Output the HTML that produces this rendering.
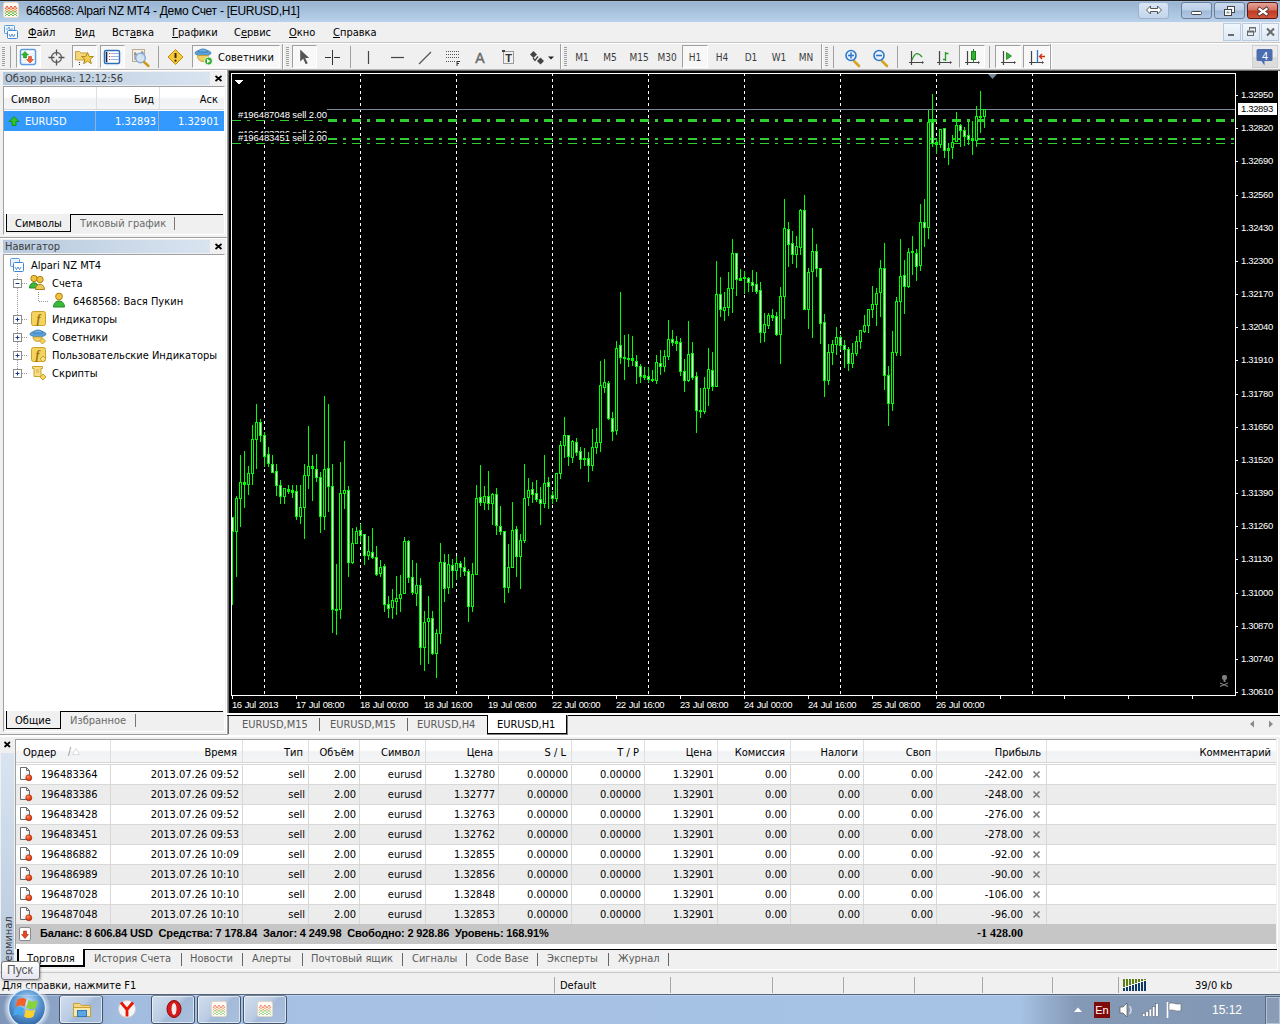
<!DOCTYPE html>
<html lang="ru"><head><meta charset="utf-8"><title>6468568: Alpari NZ MT4 - Демо Счет - [EURUSD,H1]</title>
<style>
html,body{margin:0;padding:0;}
body{width:1280px;height:1024px;overflow:hidden;position:relative;background:#f0f0f0;font-family:"DejaVu Sans Condensed","Liberation Sans",sans-serif;font-size:11px;color:#000;}
.a{position:absolute;}
.t{position:absolute;white-space:nowrap;line-height:13px;}
svg{position:absolute;overflow:visible;}
#title{left:0;top:0;width:1280px;height:22px;background:linear-gradient(#a2bedc 0,#a2bedc 2px,#99b4d1 2px,#b9d1ea 22px);}
#title .top{left:0;top:0;width:1280px;height:1px;background:#262220;}
#title .cap{left:26px;top:3px;font-size:12px;line-height:16px;color:#000;letter-spacing:-0.28px;font-family:"Liberation Sans",sans-serif;}
.wb{position:absolute;top:2px;height:17px;border:1px solid #6b7f99;border-radius:3px;background:linear-gradient(#cbdbee 0,#bccfe8 48%,#a0badb 52%,#b2c9e5 100%);box-sizing:border-box;}
.wb.close{border-color:#5a1714;background:linear-gradient(#e2a499 0,#d3705f 48%,#c03a22 52%,#d0573c 100%);}
#menu{left:0;top:22px;width:1280px;height:20px;background:#f0f0f0;border-bottom:1px solid #fafafa;}
#menu .t{top:4px;font-size:11px;line-height:13px;}
#menu u{text-decoration:underline;}
.mdi{position:absolute;top:23px;width:18px;height:18px;box-sizing:border-box;border:1px solid #b9cbe0;background:linear-gradient(#f1f6fc,#dde9f6);}
#tb{left:0;top:42px;width:1280px;height:28px;background:#f0f0f0;border-top:1px solid #c5c5c5;box-sizing:border-box;}
#tb:before{content:"";position:absolute;left:0;top:0;width:1280px;height:1px;background:#fff;}
#tb:after{content:"";position:absolute;left:0;top:26px;width:1280px;height:1px;background:#b8b8b8;}
.pb{position:absolute;top:2px;height:23px;box-sizing:border-box;border:1px solid;border-color:#a0a0a0 #fff #fff #a0a0a0;background:#f8f8f8;}
.grip{position:absolute;top:4px;width:3px;height:20px;background:repeating-linear-gradient(#a0a0a0 0,#a0a0a0 1px,#f0f0f0 1px,#f0f0f0 2px);}
.sep{position:absolute;top:3px;width:1px;height:22px;background:#a0a0a0;}
#tb .t{top:7px;font-size:11px;line-height:13px;color:#333;}
#tb svg{top:0;left:0;}
.ptitle{position:absolute;left:3px;width:207px;height:13px;background:linear-gradient(90deg,#b7c9dd,#d9e4f0);}
.ptitle .t{left:2px;top:0px;font-size:11px;line-height:13px;color:#3c3c3c;}
.px{position:absolute;left:214px;width:9px;height:9px;}
.wbox{position:absolute;left:4px;width:220px;background:#fff;}
.frame{position:absolute;left:3px;width:222px;box-sizing:border-box;border:1px solid;border-color:#a0a0a0 #fff #fff #a0a0a0;}
.hdr{position:absolute;background:linear-gradient(#ffffff 0,#ffffff 45%,#f1f2f4 55%,#f4f5f7 100%);border-bottom:1px solid #d5d5d5;border-right:1px solid #dedfe1;box-sizing:border-box;}
.ptab{position:absolute;font-size:11px;line-height:13px;white-space:nowrap;}
.tree .t{font-size:11px;line-height:13px;}
#chart{left:229px;top:71px;width:1049px;height:642px;background:#000;}
#chart .t{color:#fff;font-family:"Liberation Sans",sans-serif;font-size:9.500px;line-height:11px;letter-spacing:-0.100px;}
#ctabs{left:228px;top:713px;width:1052px;height:22px;background:#f0f0f0;}
#ctabs .t{top:5px;color:#5a5a5a;}
#term{left:0;top:738px;width:1280px;height:234px;background:#f0f0f0;}
#term .grid{position:absolute;left:15px;top:1px;width:1261px;height:210px;background:#fff;border-top:1px solid #a0a0a0;border-left:1px solid #a0a0a0;box-sizing:border-box;}
#term .row{position:absolute;left:0;width:1260px;height:20px;box-sizing:border-box;border-top:1px solid #d8d8d8;}
#term .row.odd{background:#ececec;}
#term .row .t{top:3px;}
#term .c{position:absolute;top:0;height:19px;box-sizing:border-box;border-right:1px solid #d8d8d8;}
#term .c .t{right:3px;}
#term .hc{position:absolute;top:0;height:22px;}
#term .hc .t{right:5px;top:6px;}
.btab{position:absolute;top:214px;font-size:11px;line-height:13px;color:#5a5a5a;white-space:nowrap;}
.bsep{position:absolute;top:215px;width:1px;height:13px;background:#666;}
#status{left:0;top:972px;width:1280px;height:22px;background:#f0f0f0;border-top:1px solid #c8c8c8;box-sizing:border-box;}
#status .t{top:6px;}
#status .s{position:absolute;top:4px;width:1px;height:16px;background:#a8a8a8;}
#task{left:0;top:994px;width:1280px;height:30px;background:linear-gradient(90deg,#7f96b8 0,#8da5c7 60px,#a2bcdf 115px,#a6c1e3 300px,#a6c2e4 1020px,#8499b6 1075px,#8398b5 1280px);}
#task:before{content:"";position:absolute;left:0;top:0;width:1280px;height:1px;background:#55657e;}
#task:after{content:"";position:absolute;left:0;top:1px;width:1280px;height:1px;background:rgba(255,255,255,0.250);}
.tbtn{position:absolute;top:1px;height:29px;width:44px;box-sizing:border-box;border:1px solid #43536c;border-radius:3px;background:linear-gradient(135deg,#d3deee 0,#b9cbe3 45%,#a3bad9 55%,#a9c0df 100%);box-shadow:inset 0 0 0 1px rgba(255,255,255,0.600);}

</style></head>
<body>
<div id="title" class="a"><div class="a top"></div>
<svg style="left:3px;top:2px" width="16" height="16" viewBox="0 0 16 16"><rect x="0.5" y="0.5" width="15" height="15" rx="2" fill="#fdf8f0" stroke="#e8dcc8"/><path d="M2 7l2-3 2 3 2-3 2 3 2-3 2 3" stroke="#e0482f" fill="none"/><path d="M2 9.500l2-3 2 3 2-3 2 3 2-3 2 3" stroke="#e88a3a" fill="none"/><path d="M2 12l2-3 2 3 2-3 2 3 2-3 2 3" stroke="#69b84a" fill="none"/><path d="M2 14l2-2 2 2 2-2 2 2 2-2 2 2" stroke="#69b84a" fill="none"/></svg>
<div class="t cap">6468568: Alpari NZ MT4 - Демо Счет - [EURUSD,H1]</div>
<div class="wb" style="left:1138px;width:31px;background:linear-gradient(#d8e5f4,#c4d6ec);border-color:#9fb2cb"><svg style="left:7px;top:2px" width="16" height="10" viewBox="0 0 16 10"><path d="M0.500 5l4-4v2.500h7v-2.500l4 4-4 4v-2.500h-7v2.500z" fill="#fff" stroke="#555" stroke-width="1"/></svg></div>
<div class="wb" style="left:1181px;width:31px"><svg style="left:9px;top:8px" width="12" height="5"><rect x="0.500" y="0.500" width="10" height="3" rx="1" fill="#fff" stroke="#444"/></svg></div>
<div class="wb" style="left:1214px;width:31px"><svg style="left:8px;top:2px" width="14" height="12"><rect x="4.500" y="1.500" width="7" height="6" fill="#fff" stroke="#444"/><rect x="6.500" y="3.500" width="3" height="2" fill="#c0d3ea" stroke="#444" stroke-width="0"/><rect x="1.500" y="4.500" width="7" height="6" fill="#fff" stroke="#444"/><rect x="3.500" y="6.500" width="3" height="2" fill="#8aa" stroke="none"/></svg></div>
<div class="wb close" style="left:1247px;width:31px"><svg style="left:9px;top:2px" width="12" height="11" viewBox="0 0 12 11"><path d="M2.500 4l7 5M9.500 4l-7 5" stroke="#4a3030" stroke-width="3.800" stroke-linecap="square"/><path d="M2.500 4l7 5M9.500 4l-7 5" stroke="#fff" stroke-width="2.200" stroke-linecap="square"/></svg></div>
</div>
<div id="menu" class="a">
<svg style="left:3px;top:2px" width="16" height="16" viewBox="0 0 16 16"><rect x="1.500" y="1.500" width="10" height="8" rx="1" fill="#eaf3fc" stroke="#5d9ad8"/><path d="M3 5h2l1-2 1 3 1-1h2" stroke="#5d9ad8" fill="none" stroke-width="0.800"/><rect x="4.500" y="6.500" width="10" height="8" rx="1" fill="#fff" stroke="#3f86d1"/><path d="M6 10l1.500 3 1.500-3 1.500 3 1.500-3" stroke="#3f86d1" fill="none" stroke-width="0.900"/></svg>
<div class="t" style="left:28px"><u>Ф</u>айл</div>
<div class="t" style="left:75px"><u>В</u>ид</div>
<div class="t" style="left:112px">Вст<u>а</u>вка</div>
<div class="t" style="left:172px"><u>Г</u>рафики</div>
<div class="t" style="left:234px">С<u>е</u>рвис</div>
<div class="t" style="left:289px"><u>О</u>кно</div>
<div class="t" style="left:333px"><u>С</u>правка</div>
</div>
<div class="mdi" style="left:1223px"><svg width="16" height="16" style="left:0;top:0"><rect x="4" y="10" width="6" height="2" fill="#6a6a6a"/></svg></div>
<div class="mdi" style="left:1242px"><svg width="16" height="16" style="left:0;top:0"><path d="M6.500 6v-2.500h6v4.500h-2" fill="none" stroke="#6a6a6a"/><path d="M6 4h7" stroke="#6a6a6a"/><rect x="4.500" y="7.500" width="6" height="4" fill="none" stroke="#6a6a6a"/><path d="M4 7.500h7" stroke="#6a6a6a" stroke-width="2"/></svg></div>
<div class="mdi" style="left:1261px"><svg width="16" height="16" style="left:0;top:0"><path d="M5 4.500l7 7M12 4.500l-7 7" stroke="#6a6a6a" stroke-width="2"/></svg></div>
<div id="tb" class="a">
<div class="pb" style="left:16px;width:25px"></div><div class="pb" style="left:72px;width:25px"></div><div class="pb" style="left:100px;width:25px"></div><div class="pb" style="left:192px;width:88px"></div><div class="pb" style="left:292px;width:25px"></div><div class="pb" style="left:682px;width:26px"></div><div class="pb" style="left:959px;width:26px"></div><div class="pb" style="left:995px;width:26px"></div><div class="pb" style="left:1023px;width:27px"></div><div class="grip" style="left:2px"></div><div class="grip" style="left:286px"></div><div class="grip" style="left:564px"></div><div class="grip" style="left:825px"></div><div class="a" style="left:282px;top:1px;width:1px;height:25px;background:#a0a0a0"></div><div class="a" style="left:283px;top:1px;width:1px;height:25px;background:#fff"></div><div class="a" style="left:560px;top:1px;width:1px;height:25px;background:#a0a0a0"></div><div class="a" style="left:561px;top:1px;width:1px;height:25px;background:#fff"></div><div class="a" style="left:821px;top:1px;width:1px;height:25px;background:#a0a0a0"></div><div class="a" style="left:822px;top:1px;width:1px;height:25px;background:#fff"></div><div class="a" style="left:1050px;top:1px;width:1px;height:25px;background:#a0a0a0"></div><div class="a" style="left:1051px;top:1px;width:1px;height:25px;background:#fff"></div><div class="sep" style="left:10px"></div><div class="sep" style="left:158px"></div><div class="sep" style="left:350px"></div><div class="sep" style="left:833px"></div><div class="sep" style="left:897px"></div><div class="sep" style="left:989px"></div><div class="t" style="left:218px;top:8px;font-size:11px;line-height:13px;color:#000">Советники</div><div class="t" style="left:561px;width:42px;text-align:center;top:8px;font-size:10px;color:#3c3c3c">M1</div><div class="t" style="left:589px;width:42px;text-align:center;top:8px;font-size:10px;color:#3c3c3c">M5</div><div class="t" style="left:618px;width:42px;text-align:center;top:8px;font-size:10px;color:#3c3c3c">M15</div><div class="t" style="left:646px;width:42px;text-align:center;top:8px;font-size:10px;color:#3c3c3c">M30</div><div class="t" style="left:674px;width:42px;text-align:center;top:8px;font-size:10px;color:#3c3c3c">H1</div><div class="t" style="left:701px;width:42px;text-align:center;top:8px;font-size:10px;color:#3c3c3c">H4</div><div class="t" style="left:730px;width:42px;text-align:center;top:8px;font-size:10px;color:#3c3c3c">D1</div><div class="t" style="left:758px;width:42px;text-align:center;top:8px;font-size:10px;color:#3c3c3c">W1</div><div class="t" style="left:785px;width:42px;text-align:center;top:8px;font-size:10px;color:#3c3c3c">MN</div><svg style="left:0;top:-43px" width="1280" height="72" viewBox="0 0 1280 72">
<rect x="20.500" y="49.500" width="15" height="15" rx="2" fill="#fff" stroke="#5b9be0" stroke-width="1.500"/><path d="M25 51.500l3.500 3.500h-2v3h-3v-3h-2z" fill="#2fb52f" stroke="#1c8a1c" stroke-width="0.600"/><path d="M30 63l-3.500-3.500h2v-3h3v3h2z" fill="#f0603a" stroke="#c6401c" stroke-width="0.600"/><path d="M30 53.500h4M30 55.500h4M22 60.500h4M22 62.500h4" stroke="#d8e4f0" stroke-width="0.800"/><circle cx="56.500" cy="57.500" r="5" fill="none" stroke="#666" stroke-width="1.300"/><path d="M56.500 49.500v6M56.500 59.500v6M48.500 57.500h6M58.500 57.500h6" stroke="#555" stroke-width="1.300"/><path d="M75.500 51.500h4l1.500 1.500h5.500v7h-11z" fill="#f3d678" stroke="#c9a03a"/><path d="M79.500 62v1M79.500 64v1" stroke="#333"/><path d="M87.500 52.500l1.800 4h4.200l-3.400 2.800 1.300 4.400-3.900-2.600-3.900 2.600 1.300-4.400-3.400-2.800h4.200z" fill="#f2cf4c" stroke="#b48a18"/><rect x="104.500" y="50.500" width="15" height="13" rx="1.500" fill="#fff" stroke="#2f6fb5" stroke-width="1.500"/><rect x="105.300" y="51.300" width="2.500" height="11.400" fill="#7fa6d8"/><path d="M106.500 52v10" stroke="#222" stroke-width="1"/><path d="M109 53.500h1.200M109 56.500h1.200M109 59.500h1.200" stroke="#e03020" stroke-width="1.200"/><path d="M111 53.500h8M111 56.500h8M111 59.500h8" stroke="#9ab0e0"/><rect x="132.500" y="49.500" width="12" height="12" fill="#f4f0e6" stroke="#b8ad90"/><path d="M135 52v8M142 51v6M134 54h3M141 53h3" stroke="#777"/><circle cx="140.500" cy="58" r="4.800" fill="#cfe2f7" fill-opacity="0.850" stroke="#7fa8d8" stroke-width="1.300"/><path d="M144 62l4.500 4" stroke="#c9991c" stroke-width="2.400" stroke-linecap="round"/><path d="M175.500 49.500l7.500 7.500-7.500 7.500-7.500-7.500z" fill="#f7c93a" stroke="#c18d10"/><path d="M175.500 53v5" stroke="#3a2a00" stroke-width="2"/><circle cx="175.500" cy="60.700" r="1.100" fill="#3a2a00"/><ellipse cx="203" cy="53" rx="8" ry="3" fill="#5aa0d8" stroke="#3a78b0" stroke-width="0.800"/><path d="M198.500 52c0-4 9-4 9 0z" fill="#6db0e4" stroke="#3a78b0" stroke-width="0.800"/><path d="M197.500 55.500c0 8 11 8 11 0z" fill="#f0d060" stroke="#c09a28" stroke-width="0.800"/><circle cx="208.500" cy="61" r="4" fill="#2fae2f" stroke="#fff" stroke-width="0.800"/><path d="M207 58.800l3.500 2.200-3.500 2.200z" fill="#fff"/><path d="M300.200 49.500v12l3-2.800 2.500 5.500 2-1-2.500-5.300h4z" fill="#555"/><path d="M332.500 50v15M325 57.500h6M334 57.500h6" stroke="#333" stroke-width="1"/><path d="M368.500 51v13" stroke="#444" stroke-width="1.200"/><path d="M391 57.500h13" stroke="#444" stroke-width="1.200"/><path d="M419 64l12-12" stroke="#555" stroke-width="1.300"/><path d="M446 51.500h13M446 54.500h13M446 57.500h13M446 61.500h9" stroke="#555" stroke-dasharray="1 1"/><path d="M457 61v5M457 61.500h3M457 63.500h2" stroke="#333" stroke-width="1"/><text x="480" y="63" font-size="14" fill="#666" stroke="#666" stroke-width="0.400" text-anchor="middle" font-family="Liberation Sans, sans-serif">A</text><rect x="503.500" y="51.500" width="10" height="12" fill="none" stroke="#444" stroke-dasharray="1 1"/><text x="508.500" y="62" font-size="11" font-weight="bold" fill="#333" text-anchor="middle" font-family="Liberation Sans, sans-serif">T</text><rect x="502" y="50" width="3" height="2" fill="#444"/><path d="M530 54.500l3.500-3.500 3.500 3.500-3.500 3.500z" fill="#444"/><path d="M533 58l2 2.500 3-4" stroke="#444" fill="none" stroke-width="1.300"/><path d="M537 61l3.500-3.500 3.500 3.500-3.500 3.500z" fill="#444"/><path d="M548 56.500h6l-3 3z" fill="#222"/><path d="M854 61l5 5" stroke="#d4a520" stroke-width="2.600" stroke-linecap="round"/><circle cx="851" cy="55.500" r="5" fill="#e8f1fb" stroke="#2f78c8" stroke-width="1.600"/><path d="M848 55.500h6" stroke="#2f78c8" stroke-width="1.600"/><path d="M851 52.500v6" stroke="#2f78c8" stroke-width="1.600"/><path d="M882 61l5 5" stroke="#d4a520" stroke-width="2.600" stroke-linecap="round"/><circle cx="879" cy="55.500" r="5" fill="#e8f1fb" stroke="#2f78c8" stroke-width="1.600"/><path d="M876 55.500h6" stroke="#2f78c8" stroke-width="1.600"/><path d="M911.5 51v14M909 62.500h14" stroke="#444" stroke-width="1.200" fill="none"/><path d="M924 62.500l-2-1.500v3z" fill="#444"/><path d="M939.5 51v14M937 62.500h14" stroke="#444" stroke-width="1.200" fill="none"/><path d="M952 62.500l-2-1.500v3z" fill="#444"/><path d="M967.5 51v14M965 62.500h14" stroke="#444" stroke-width="1.200" fill="none"/><path d="M980 62.500l-2-1.500v3z" fill="#444"/><path d="M1003.5 51v14M1001 62.500h14" stroke="#444" stroke-width="1.200" fill="none"/><path d="M1016 62.500l-2-1.500v3z" fill="#444"/><path d="M1031.5 51v14M1029 62.500h14" stroke="#444" stroke-width="1.200" fill="none"/><path d="M1044 62.500l-2-1.500v3z" fill="#444"/><path d="M912 60c3-8 6-8 10-3" stroke="#2a9a2a" stroke-width="1.300" fill="none"/><path d="M945.500 52v9M945.500 53.500h3M943 59.500h2.500" stroke="#2a9a2a" stroke-width="1.300" fill="none"/><path d="M973.500 49v14" stroke="#1f7f1f"/><rect x="971.500" y="51.500" width="4" height="8" fill="#2fb52f" stroke="#1f7f1f"/><path d="M1006.500 52.500l5 3.500-5 3.500z" fill="#2fb52f" stroke="#1f7f1f" stroke-width="0.800"/><path d="M1037.500 50v13" stroke="#2f6fc0" stroke-width="1.300"/><path d="M1045 56.500h-5M1042 54l-2.500 2.500 2.500 2.500" stroke="#d03010" stroke-width="1.300" fill="none"/><rect x="1252.500" y="45.500" width="25" height="22" fill="#ececec" stroke="#d0d0d0"/><rect x="1253" y="57" width="24" height="10" fill="#dcdcdc"/><path d="M1258 49h13a1.500 1.500 0 0 1 1.500 1.500v9a1.500 1.500 0 0 1-1.500 1.500h-6.500l0 4.500-3-4.500h-3.500a1.500 1.500 0 0 1-1.500-1.500v-9a1.500 1.500 0 0 1 1.500-1.500z" fill="#4a6db0"/><text x="1265" y="60" font-size="11" fill="#fff" text-anchor="middle" font-family="Liberation Sans, sans-serif">4</text></svg>
</div>
<div class="a" style="left:226px;top:70px;width:1px;height:666px;background:#fff"></div><div class="a" style="left:227px;top:70px;width:1px;height:666px;background:#a0a0a0"></div><div class="a" style="left:228px;top:70px;width:1px;height:666px;background:#696969"></div><div class="a" style="left:0;top:70px;width:227px;height:1px;background:#fff"></div><div class="a" style="left:228px;top:70px;width:1052px;height:1px;background:#696969"></div><div class="a" style="left:0;top:237px;width:227px;height:1px;background:#a0a0a0"></div><div class="a" style="left:0;top:238px;width:227px;height:1px;background:#fff"></div><div class="ptitle" style="top:72px"><div class="t">Обзор рынка: 12:12:56</div></div><svg class="px" style="left:214px;top:74px" width="9" height="9" viewBox="0 0 9 9"><path d="M1.500 2l6 5M7.500 2l-6 5" stroke="#000" stroke-width="1.700"/></svg><div class="frame" style="top:86px;height:149px"></div><div class="wbox" style="top:87px;height:127px"><div class="hdr" style="left:0;top:0;width:93px;height:23px"><div class="t" style="left:7px;top:6px">Символ</div></div><div class="hdr" style="left:93px;top:0;width:63px;height:23px"><div class="t" style="right:5px;top:6px">Бид</div></div><div class="hdr" style="left:156px;top:0;width:64px;height:23px;border-right:none"><div class="t" style="right:6px;top:6px">Аск</div></div><div class="a" style="left:0;top:24px;width:220px;height:20px;background:#3399ff;color:#fff"><div class="a" style="left:91px;top:0;width:1px;height:20px;background:#9ab0c8"></div><div class="a" style="left:154px;top:0;width:1px;height:20px;background:#9ab0c8"></div><svg style="left:4px;top:5px" width="12" height="11" viewBox="0 0 12 11"><path d="M6 0.500l5 5h-3v4h-4v-4h-3z" fill="#2fc12f" stroke="#168a16" stroke-width="0.900"/></svg><div class="t" style="left:21px;top:4px">EURUSD</div><div class="t" style="right:68px;top:4px">1.32893</div><div class="t" style="right:5px;top:4px">1.32901</div></div></div><div class="a" style="left:71px;top:214px;width:152px;height:1px;background:#000"></div><div class="a" style="left:6px;top:214px;width:65px;height:18px;background:#f0f0f0;border:1px solid #000;border-top:none;box-sizing:border-box;box-shadow:-1px 0 0 #fff"></div><div class="ptab" style="left:15px;top:217px">Символы</div><div class="ptab" style="left:80px;top:217px;color:#6a6a6a">Тиковый график</div><div class="a" style="left:174px;top:217px;width:1px;height:13px;background:#777"></div><div class="ptitle" style="top:240px"><div class="t">Навигатор</div></div><svg class="px" style="left:214px;top:242px" width="9" height="9" viewBox="0 0 9 9"><path d="M1.500 2l6 5M7.500 2l-6 5" stroke="#000" stroke-width="1.700"/></svg><div class="frame" style="top:254px;height:478px"></div><div class="wbox tree" style="top:255px;height:456px"><div class="t" style="left:27px;top:4px">Alpari NZ MT4</div><div class="t" style="left:48px;top:22px">Счета</div><div class="t" style="left:69px;top:40px">6468568: Вася Пукин</div><div class="t" style="left:48px;top:58px">Индикаторы</div><div class="t" style="left:48px;top:76px">Советники</div><div class="t" style="left:48px;top:94px">Пользовательские Индикаторы</div><div class="t" style="left:48px;top:112px">Скрипты</div><svg style="left:-4px;top:-255px" width="230" height="400" viewBox="0 0 230 400"><path d="M17.500 274v100" stroke="#999" stroke-dasharray="1 1"/><path d="M38.500 292v9.500h10" stroke="#999" stroke-dasharray="1 1" fill="none"/><path d="M22 283.5h6" stroke="#999" stroke-dasharray="1 1"/><rect x="13.500" y="279.5" width="8" height="8" fill="#fff" stroke="#8a8a8a"/><path d="M15.500 283.5h4" stroke="#1a3a8a"/><path d="M22 319.5h6" stroke="#999" stroke-dasharray="1 1"/><rect x="13.500" y="315.5" width="8" height="8" fill="#fff" stroke="#8a8a8a"/><path d="M15.500 319.5h4" stroke="#1a3a8a"/><path d="M17.500 317.5v4" stroke="#1a3a8a"/><path d="M22 337.5h6" stroke="#999" stroke-dasharray="1 1"/><rect x="13.500" y="333.5" width="8" height="8" fill="#fff" stroke="#8a8a8a"/><path d="M15.500 337.5h4" stroke="#1a3a8a"/><path d="M17.500 335.5v4" stroke="#1a3a8a"/><path d="M22 355.5h6" stroke="#999" stroke-dasharray="1 1"/><rect x="13.500" y="351.5" width="8" height="8" fill="#fff" stroke="#8a8a8a"/><path d="M15.500 355.5h4" stroke="#1a3a8a"/><path d="M17.500 353.5v4" stroke="#1a3a8a"/><path d="M22 373.5h6" stroke="#999" stroke-dasharray="1 1"/><rect x="13.500" y="369.5" width="8" height="8" fill="#fff" stroke="#8a8a8a"/><path d="M15.500 373.5h4" stroke="#1a3a8a"/><path d="M17.500 371.5v4" stroke="#1a3a8a"/><rect x="10.500" y="258.500" width="9" height="8" rx="1" fill="#eaf3fc" stroke="#5d9ad8"/><rect x="13.500" y="262.500" width="10" height="9" rx="1" fill="#fff" stroke="#3f86d1"/><path d="M15 267l1.500 2.500 1.500-2.500 1.500 2.500 1.500-2.500" stroke="#3f86d1" fill="none" stroke-width="0.900"/><circle cx="34" cy="278.500" r="3.200" fill="#f0c040" stroke="#b08010"/><path d="M29.500 288c0-7 9-7 9 0z" fill="#3cb83c" stroke="#1f8a1f"/><circle cx="40" cy="279.500" r="3.200" fill="#f0c040" stroke="#b08010"/><path d="M35.500 289.500c0-7 9-7 9 0z" fill="#e8c860" stroke="#b08010"/><circle cx="59" cy="296.500" r="3.400" fill="#f0c040" stroke="#b08010"/><path d="M53.500 307c0-8 11-8 11 0z" fill="#3cb83c" stroke="#1f8a1f"/><rect x="31.500" y="311.500" width="14" height="14" rx="2" fill="#f4d35e" stroke="#c9a227"/><text x="38.500" y="323" font-size="12" font-style="italic" font-weight="bold" fill="#9a7410" text-anchor="middle" font-family="Liberation Serif, serif">f</text><ellipse cx="38" cy="334" rx="8" ry="3" fill="#5aa0d8" stroke="#3a78b0" stroke-width="0.800"/><path d="M33.500 333c0-4 9-4 9 0z" fill="#6db0e4" stroke="#3a78b0" stroke-width="0.800"/><path d="M33 337c0 6 9 6 9 0z" fill="#f0d060" stroke="#c09a28" stroke-width="0.800"/><path d="M42.500 338l3 3-3 3-3-3z" fill="#f4d35e" stroke="#c9a227"/><rect x="31.500" y="347.500" width="14" height="14" rx="2" fill="#f4d35e" stroke="#c9a227"/><text x="37.500" y="359" font-size="12" font-style="italic" font-weight="bold" fill="#9a7410" text-anchor="middle" font-family="Liberation Serif, serif">f</text><path d="M43 356l3 3-3 3-3-3z" fill="#f8e08a" stroke="#c9a227"/><path d="M32.500 366.500h10v2h-1.500v8h-7v-8h-1.500z" fill="#f6dc8a" stroke="#c9a227"/><path d="M43 374l3 3-3 3-3-3z" fill="#f4d35e" stroke="#c9a227"/><path d="M36 370h3M36 372h3" stroke="#c9a227" stroke-width="0.800"/></svg></div><div class="a" style="left:61px;top:711px;width:162px;height:1px;background:#000"></div><div class="a" style="left:6px;top:711px;width:55px;height:18px;background:#f0f0f0;border:1px solid #000;border-top:none;box-sizing:border-box;box-shadow:-1px 0 0 #fff"></div><div class="ptab" style="left:15px;top:714px">Общие</div><div class="ptab" style="left:70px;top:714px;color:#6a6a6a">Избранное</div><div class="a" style="left:135px;top:714px;width:1px;height:13px;background:#777"></div><div class="a" style="left:1278px;top:71px;width:1px;height:644px;background:#fff"></div><div id="chart" class="a">
<svg style="left:-229px;top:-71px" width="1280" height="720" viewBox="0 0 1280 720" shape-rendering="crispEdges">
<path d="M264.5 73V695" stroke="#fff" stroke-dasharray="3 3"/><path d="M360.5 73V695" stroke="#fff" stroke-dasharray="3 3"/><path d="M456.5 73V695" stroke="#fff" stroke-dasharray="3 3"/><path d="M552.5 73V695" stroke="#fff" stroke-dasharray="3 3"/><path d="M648.5 73V695" stroke="#fff" stroke-dasharray="3 3"/><path d="M744.5 73V695" stroke="#fff" stroke-dasharray="3 3"/><path d="M840.5 73V695" stroke="#fff" stroke-dasharray="3 3"/><path d="M936.5 73V695" stroke="#fff" stroke-dasharray="3 3"/><path d="M1032.5 73V695" stroke="#fff" stroke-dasharray="3 3"/><path d="M1236 95.5h2" stroke="#fff"/><path d="M1236 128.5h2" stroke="#fff"/><path d="M1236 161.5h2" stroke="#fff"/><path d="M1236 195.5h2" stroke="#fff"/><path d="M1236 228.5h2" stroke="#fff"/><path d="M1236 261.5h2" stroke="#fff"/><path d="M1236 294.5h2" stroke="#fff"/><path d="M1236 327.5h2" stroke="#fff"/><path d="M1236 360.5h2" stroke="#fff"/><path d="M1236 394.5h2" stroke="#fff"/><path d="M1236 427.5h2" stroke="#fff"/><path d="M1236 460.5h2" stroke="#fff"/><path d="M1236 493.5h2" stroke="#fff"/><path d="M1236 526.5h2" stroke="#fff"/><path d="M1236 559.5h2" stroke="#fff"/><path d="M1236 593.5h2" stroke="#fff"/><path d="M1236 626.5h2" stroke="#fff"/><path d="M1236 659.5h2" stroke="#fff"/><path d="M1236 692.5h2" stroke="#fff"/><path d="M232.5 696v3" stroke="#fff"/><path d="M296.5 696v3" stroke="#fff"/><path d="M360.5 696v3" stroke="#fff"/><path d="M424.5 696v3" stroke="#fff"/><path d="M488.5 696v3" stroke="#fff"/><path d="M552.5 696v3" stroke="#fff"/><path d="M616.5 696v3" stroke="#fff"/><path d="M680.5 696v3" stroke="#fff"/><path d="M744.5 696v3" stroke="#fff"/><path d="M808.5 696v3" stroke="#fff"/><path d="M872.5 696v3" stroke="#fff"/><path d="M936.5 696v3" stroke="#fff"/><path d="M1000.5 696v3" stroke="#fff"/><path d="M1064.5 696v3" stroke="#fff"/><path d="M1128.5 696v3" stroke="#fff"/><path d="M1192.5 696v3" stroke="#fff"/><path d="M327 109.500H1236" stroke="#778899"/><path d="M232 120.500H328" stroke="#32cd32" stroke-dasharray="9 6 3 6"/><path d="M328 120.500H1235" stroke="#32cd32" stroke-width="3" stroke-dasharray="9 6 3 6"/><path d="M328 139H1235" stroke="#32cd32" stroke-width="2" stroke-dasharray="9 6 3 6"/><path d="M232 143.500H1235" stroke="#32cd32" stroke-dasharray="9 6 3 6"/><path d="M235 80h8l-4 4.500z" fill="#fff"/><path d="M988 74h9l-4.500 5z" fill="#778899" shape-rendering="auto"/><path d="M232 517h1v88h-1zM231 517h3v15h-3zM236 496h1v81h-1zM235 498h3v34h-3zM240 455h1v72h-1zM239 482h3v17h-3zM244 451h1v57h-1zM243 482h3v3h-3zM248 466h1v29h-1zM247 473h3v12h-3zM252 425h1v60h-1zM251 439h3v35h-3zM256 404h1v65h-1zM255 422h3v18h-3zM260 419h1v23h-1zM259 422h3v14h-3zM264 432h1v35h-1zM263 435h3v22h-3zM268 447h1v20h-1zM267 454h3v10h-3zM272 455h1v18h-1zM271 464h3v9h-3zM276 464h1v32h-1zM275 471h3v15h-3zM280 480h1v24h-1zM279 485h3v12h-3zM284 488h1v16h-1zM283 488h3v9h-3zM288 485h1v9h-1zM287 489h3v3h-3zM292 485h1v13h-1zM291 490h3v3h-3zM296 485h1v35h-1zM295 491h3v26h-3zM300 485h1v39h-1zM299 507h3v10h-3zM304 464h1v75h-1zM303 475h3v33h-3zM308 426h1v63h-1zM307 466h3v10h-3zM312 455h1v46h-1zM311 466h3v3h-3zM316 454h1v28h-1zM315 469h3v9h-3zM320 472h1v61h-1zM319 477h3v40h-3zM324 396h1v134h-1zM323 469h3v48h-3zM328 404h1v108h-1zM327 468h3v19h-3zM332 464h1v169h-1zM331 486h3v124h-3zM336 564h1v71h-1zM335 609h3v2h-3zM340 462h1v157h-1zM339 493h3v117h-3zM344 441h1v68h-1zM343 490h3v4h-3zM348 486h1v91h-1zM347 490h3v73h-3zM352 528h1v36h-1zM351 543h3v20h-3zM356 527h1v17h-1zM355 531h3v13h-3zM360 524h1v18h-1zM359 530h3v6h-3zM364 534h1v31h-1zM363 534h3v22h-3zM368 536h1v24h-1zM367 551h3v5h-3zM372 528h1v31h-1zM371 552h3v6h-3zM376 546h1v30h-1zM375 557h3v18h-3zM380 560h1v17h-1zM379 567h3v7h-3zM384 564h1v48h-1zM383 566h3v39h-3zM388 596h1v22h-1zM387 604h3v5h-3zM392 589h1v30h-1zM391 600h3v8h-3zM396 576h1v39h-1zM395 598h3v4h-3zM400 575h1v37h-1zM399 594h3v5h-3zM404 537h1v57h-1zM403 541h3v53h-3zM408 540h1v43h-1zM407 541h3v37h-3zM412 560h1v35h-1zM411 577h3v16h-3zM416 563h1v43h-1zM415 585h3v9h-3zM420 578h1v87h-1zM419 585h3v63h-3zM424 611h1v60h-1zM423 622h3v26h-3zM428 596h1v68h-1zM427 618h3v4h-3zM432 611h1v44h-1zM431 618h3v36h-3zM436 629h1v49h-1zM435 633h3v21h-3zM440 543h1v101h-1zM439 562h3v72h-3zM444 554h1v48h-1zM443 562h3v27h-3zM448 554h1v40h-1zM447 564h3v24h-3zM452 559h1v29h-1zM451 565h3v6h-3zM456 556h1v24h-1zM455 563h3v8h-3zM460 561h1v16h-1zM459 563h3v5h-3zM464 557h1v19h-1zM463 567h3v5h-3zM468 569h1v53h-1zM467 571h3v36h-3zM472 563h1v49h-1zM471 574h3v33h-3zM476 485h1v90h-1zM475 498h3v77h-3zM480 465h1v41h-1zM479 497h3v6h-3zM484 486h1v24h-1zM483 496h3v7h-3zM488 471h1v39h-1zM487 496h3v8h-3zM492 493h1v32h-1zM491 494h3v10h-3zM496 488h1v47h-1zM495 494h3v32h-3zM500 506h1v29h-1zM499 526h3v6h-3zM504 531h1v72h-1zM503 531h3v57h-3zM508 544h1v49h-1zM507 567h3v21h-3zM512 502h1v66h-1zM511 530h3v38h-3zM516 526h1v51h-1zM515 529h3v28h-3zM520 534h1v55h-1zM519 540h3v17h-3zM524 464h1v79h-1zM523 498h3v43h-3zM528 478h1v28h-1zM527 490h3v8h-3zM532 482h1v21h-1zM531 489h3v6h-3zM536 480h1v22h-1zM535 493h3v7h-3zM540 487h1v38h-1zM539 499h3v5h-3zM544 455h1v53h-1zM543 483h3v21h-3zM548 477h1v32h-1zM547 482h3v5h-3zM552 491h1v13h-1zM551 495h3v4h-3zM556 473h1v29h-1zM555 473h3v26h-3zM560 441h1v38h-1zM559 445h3v29h-3zM564 417h1v41h-1zM563 435h3v11h-3zM568 435h1v31h-1zM567 435h3v22h-3zM572 440h1v23h-1zM571 441h3v17h-3zM576 438h1v18h-1zM575 442h3v11h-3zM580 447h1v22h-1zM579 451h3v9h-3zM584 448h1v18h-1zM583 458h3v2h-3zM588 452h1v30h-1zM587 458h3v8h-3zM592 429h1v42h-1zM591 447h3v19h-3zM596 428h1v26h-1zM595 442h3v6h-3zM600 361h1v91h-1zM599 385h3v58h-3zM604 359h1v34h-1zM603 382h3v6h-3zM608 381h1v39h-1zM607 383h3v36h-3zM612 412h1v29h-1zM611 418h3v14h-3zM616 341h1v94h-1zM615 348h3v83h-3zM620 292h1v72h-1zM619 345h3v13h-3zM624 335h1v45h-1zM623 357h3v2h-3zM628 334h1v33h-1zM627 358h3v2h-3zM632 336h1v30h-1zM631 358h3v3h-3zM636 355h1v29h-1zM635 361h3v6h-3zM640 364h1v19h-1zM639 366h3v11h-3zM644 367h1v13h-1zM643 375h3v3h-3zM648 367h1v16h-1zM647 376h3v4h-3zM652 370h1v12h-1zM651 379h3v2h-3zM656 355h1v29h-1zM655 362h3v19h-3zM660 350h1v25h-1zM659 363h3v4h-3zM664 350h1v22h-1zM663 356h3v11h-3zM668 320h1v40h-1zM667 339h3v18h-3zM672 330h1v16h-1zM671 339h3v4h-3zM676 336h1v15h-1zM675 341h3v3h-3zM680 338h1v38h-1zM679 342h3v30h-3zM684 359h1v33h-1zM683 371h3v10h-3zM688 321h1v61h-1zM687 354h3v27h-3zM692 342h1v38h-1zM691 353h3v25h-3zM696 372h1v61h-1zM695 376h3v35h-3zM700 388h1v30h-1zM699 410h3v2h-3zM704 377h1v37h-1zM703 388h3v24h-3zM708 348h1v58h-1zM707 369h3v20h-3zM712 352h1v39h-1zM711 370h3v17h-3zM716 261h1v126h-1zM715 294h3v93h-3zM720 277h1v40h-1zM719 294h3v16h-3zM724 292h1v29h-1zM723 307h3v4h-3zM728 272h1v44h-1zM727 288h3v20h-3zM732 239h1v74h-1zM731 253h3v36h-3zM736 253h1v43h-1zM735 253h3v27h-3zM740 269h1v12h-1zM739 278h3v3h-3zM744 271h1v23h-1zM743 277h3v2h-3zM748 277h1v15h-1zM747 278h3v5h-3zM752 270h1v22h-1zM751 282h3v4h-3zM756 272h1v22h-1zM755 284h3v8h-3zM760 282h1v61h-1zM759 290h3v43h-3zM764 313h1v29h-1zM763 324h3v9h-3zM768 313h1v16h-1zM767 315h3v11h-3zM772 309h1v12h-1zM771 315h3v3h-3zM776 312h1v24h-1zM775 316h3v19h-3zM780 287h1v77h-1zM779 296h3v39h-3zM784 199h1v120h-1zM783 228h3v69h-3zM788 222h1v45h-1zM787 229h3v16h-3zM792 231h1v33h-1zM791 243h3v12h-3zM796 236h1v32h-1zM795 246h3v9h-3zM800 209h1v46h-1zM799 210h3v38h-3zM804 195h1v115h-1zM803 210h3v100h-3zM808 268h1v61h-1zM807 272h3v38h-3zM812 228h1v110h-1zM811 251h3v21h-3zM816 244h1v33h-1zM815 251h3v18h-3zM820 268h1v76h-1zM819 268h3v56h-3zM824 314h1v83h-1zM823 322h3v59h-3zM828 344h1v41h-1zM827 352h3v29h-3zM832 340h1v25h-1zM831 344h3v9h-3zM836 327h1v28h-1zM835 337h3v8h-3zM840 335h1v15h-1zM839 337h3v9h-3zM844 340h1v28h-1zM843 345h3v5h-3zM848 347h1v24h-1zM847 349h3v15h-3zM852 343h1v25h-1zM851 353h3v11h-3zM856 336h1v20h-1zM855 341h3v13h-3zM860 330h1v19h-1zM859 330h3v12h-3zM864 315h1v18h-1zM863 325h3v7h-3zM868 309h1v24h-1zM867 309h3v17h-3zM872 286h1v32h-1zM871 304h3v6h-3zM876 288h1v38h-1zM875 293h3v12h-3zM880 260h1v57h-1zM879 268h3v25h-3zM884 243h1v147h-1zM883 268h3v108h-3zM888 366h1v60h-1zM887 375h3v29h-3zM892 331h1v80h-1zM891 352h3v52h-3zM896 297h1v59h-1zM895 301h3v52h-3zM900 239h1v117h-1zM899 276h3v26h-3zM904 260h1v54h-1zM903 275h3v12h-3zM908 248h1v40h-1zM907 252h3v35h-3zM912 236h1v39h-1zM911 251h3v2h-3zM916 249h1v32h-1zM915 253h3v14h-3zM920 204h1v67h-1zM919 222h3v44h-3zM924 199h1v48h-1zM923 222h3v6h-3zM928 110h1v129h-1zM927 122h3v106h-3zM932 94h1v53h-1zM931 122h3v22h-3zM936 138h1v16h-1zM935 142h3v3h-3zM940 129h1v19h-1zM939 129h3v16h-3zM944 128h1v30h-1zM943 128h3v23h-3zM948 143h1v22h-1zM947 148h3v3h-3zM952 135h1v24h-1zM951 142h3v6h-3zM956 112h1v30h-1zM955 125h3v17h-3zM960 124h1v23h-1zM959 125h3v6h-3zM964 127h1v19h-1zM963 130h3v7h-3zM968 121h1v24h-1zM967 135h3v5h-3zM972 121h1v34h-1zM971 138h3v3h-3zM976 106h1v41h-1zM975 116h3v25h-3zM980 91h1v42h-1zM979 116h3v2h-3zM984 109h1v19h-1zM983 109h3v8h-3z" fill="#00ff00"/><path d="M236 499h1v32h-1zM240 483h1v15h-1zM248 474h1v10h-1zM252 440h1v33h-1zM256 423h1v16h-1zM284 489h1v7h-1zM300 508h1v8h-1zM304 476h1v31h-1zM308 467h1v8h-1zM324 470h1v46h-1zM340 494h1v115h-1zM344 491h1v2h-1zM352 544h1v18h-1zM356 532h1v11h-1zM368 552h1v3h-1zM380 568h1v5h-1zM392 601h1v6h-1zM396 599h1v2h-1zM400 595h1v3h-1zM404 542h1v51h-1zM416 586h1v7h-1zM424 623h1v24h-1zM428 619h1v2h-1zM436 634h1v19h-1zM440 563h1v70h-1zM448 565h1v22h-1zM456 564h1v6h-1zM472 575h1v31h-1zM476 499h1v75h-1zM484 497h1v5h-1zM492 495h1v8h-1zM508 568h1v19h-1zM512 531h1v36h-1zM520 541h1v15h-1zM524 499h1v41h-1zM528 491h1v6h-1zM544 484h1v19h-1zM556 474h1v24h-1zM560 446h1v27h-1zM564 436h1v9h-1zM572 442h1v15h-1zM592 448h1v17h-1zM596 443h1v4h-1zM600 386h1v56h-1zM604 383h1v4h-1zM616 349h1v81h-1zM656 363h1v17h-1zM664 357h1v9h-1zM668 340h1v16h-1zM688 355h1v25h-1zM704 389h1v22h-1zM708 370h1v18h-1zM716 295h1v91h-1zM724 308h1v2h-1zM728 289h1v18h-1zM732 254h1v34h-1zM764 325h1v7h-1zM768 316h1v9h-1zM780 297h1v37h-1zM784 229h1v67h-1zM796 247h1v7h-1zM800 211h1v36h-1zM808 273h1v36h-1zM812 252h1v19h-1zM828 353h1v27h-1zM832 345h1v7h-1zM836 338h1v6h-1zM852 354h1v9h-1zM856 342h1v11h-1zM860 331h1v10h-1zM864 326h1v5h-1zM868 310h1v15h-1zM872 305h1v4h-1zM876 294h1v10h-1zM880 269h1v23h-1zM892 353h1v50h-1zM896 302h1v50h-1zM900 277h1v24h-1zM908 253h1v33h-1zM920 223h1v42h-1zM928 123h1v104h-1zM940 130h1v14h-1zM952 143h1v4h-1zM956 126h1v15h-1zM976 117h1v23h-1zM984 110h1v6h-1z" fill="#000"/><path d="M232 518h1v13h-1zM260 423h1v12h-1zM264 436h1v20h-1zM268 455h1v8h-1zM272 465h1v7h-1zM276 472h1v13h-1zM280 486h1v10h-1zM296 492h1v24h-1zM316 470h1v7h-1zM320 478h1v38h-1zM328 469h1v17h-1zM332 487h1v122h-1zM348 491h1v71h-1zM360 531h1v4h-1zM364 535h1v20h-1zM372 553h1v4h-1zM376 558h1v16h-1zM384 567h1v37h-1zM388 605h1v3h-1zM408 542h1v35h-1zM412 578h1v14h-1zM420 586h1v61h-1zM432 619h1v34h-1zM444 563h1v25h-1zM452 566h1v4h-1zM460 564h1v3h-1zM464 568h1v3h-1zM468 572h1v34h-1zM480 498h1v4h-1zM488 497h1v6h-1zM496 495h1v30h-1zM500 527h1v4h-1zM504 532h1v55h-1zM516 530h1v26h-1zM532 490h1v4h-1zM536 494h1v5h-1zM540 500h1v3h-1zM548 483h1v3h-1zM552 496h1v2h-1zM568 436h1v20h-1zM576 443h1v9h-1zM580 452h1v7h-1zM588 459h1v6h-1zM608 384h1v34h-1zM612 419h1v12h-1zM620 346h1v11h-1zM636 362h1v4h-1zM640 367h1v9h-1zM648 377h1v2h-1zM660 364h1v2h-1zM672 340h1v2h-1zM680 343h1v28h-1zM684 372h1v8h-1zM692 354h1v23h-1zM696 377h1v33h-1zM712 371h1v15h-1zM720 295h1v14h-1zM736 254h1v25h-1zM748 279h1v3h-1zM752 283h1v2h-1zM756 285h1v6h-1zM760 291h1v41h-1zM776 317h1v17h-1zM788 230h1v14h-1zM792 244h1v10h-1zM804 211h1v98h-1zM816 252h1v16h-1zM820 269h1v54h-1zM824 323h1v57h-1zM840 338h1v7h-1zM844 346h1v3h-1zM848 350h1v13h-1zM884 269h1v106h-1zM888 376h1v27h-1zM904 276h1v10h-1zM916 254h1v12h-1zM924 223h1v4h-1zM932 123h1v20h-1zM944 129h1v21h-1zM960 126h1v4h-1zM964 131h1v5h-1zM968 136h1v3h-1z" fill="#fff"/><path d="M231.500 695.500V73.500H1235.500V695.500z" fill="none" stroke="#fff"/><g fill="#808080" shape-rendering="auto"><rect x="1222" y="675" width="5" height="5" rx="2"/><rect x="1223.500" y="680" width="2" height="2"/><path d="M1220 683l8 3.500M1228 683l-8 3.500" stroke="#808080" stroke-width="1.200" fill="none"/></g></svg>
<div class="t" style="left:1012px;top:18px;letter-spacing:-0.36px">1.32950</div><div class="t" style="left:1012px;top:51px;letter-spacing:-0.36px">1.32820</div><div class="t" style="left:1012px;top:84px;letter-spacing:-0.36px">1.32690</div><div class="t" style="left:1012px;top:118px;letter-spacing:-0.36px">1.32560</div><div class="t" style="left:1012px;top:151px;letter-spacing:-0.36px">1.32430</div><div class="t" style="left:1012px;top:184px;letter-spacing:-0.36px">1.32300</div><div class="t" style="left:1012px;top:217px;letter-spacing:-0.36px">1.32170</div><div class="t" style="left:1012px;top:250px;letter-spacing:-0.36px">1.32040</div><div class="t" style="left:1012px;top:283px;letter-spacing:-0.36px">1.31910</div><div class="t" style="left:1012px;top:317px;letter-spacing:-0.36px">1.31780</div><div class="t" style="left:1012px;top:350px;letter-spacing:-0.36px">1.31650</div><div class="t" style="left:1012px;top:383px;letter-spacing:-0.36px">1.31520</div><div class="t" style="left:1012px;top:416px;letter-spacing:-0.36px">1.31390</div><div class="t" style="left:1012px;top:449px;letter-spacing:-0.36px">1.31260</div><div class="t" style="left:1012px;top:482px;letter-spacing:-0.36px">1.31130</div><div class="t" style="left:1012px;top:516px;letter-spacing:-0.36px">1.31000</div><div class="t" style="left:1012px;top:549px;letter-spacing:-0.36px">1.30870</div><div class="t" style="left:1012px;top:582px;letter-spacing:-0.36px">1.30740</div><div class="t" style="left:1012px;top:615px;letter-spacing:-0.36px">1.30610</div><div class="a" style="left:1009px;top:32px;width:39px;height:12px;background:#fff"></div><div class="t" style="left:1012px;top:32px;color:#000;letter-spacing:-0.36px">1.32893</div><div class="t" style="left:3px;top:628px;letter-spacing:-0.45px;word-spacing:0.9px">16 Jul 2013</div><div class="t" style="left:67px;top:628px;letter-spacing:-0.45px;word-spacing:0.9px">17 Jul 08:00</div><div class="t" style="left:131px;top:628px;letter-spacing:-0.45px;word-spacing:0.9px">18 Jul 00:00</div><div class="t" style="left:195px;top:628px;letter-spacing:-0.45px;word-spacing:0.9px">18 Jul 16:00</div><div class="t" style="left:259px;top:628px;letter-spacing:-0.45px;word-spacing:0.9px">19 Jul 08:00</div><div class="t" style="left:323px;top:628px;letter-spacing:-0.45px;word-spacing:0.9px">22 Jul 00:00</div><div class="t" style="left:387px;top:628px;letter-spacing:-0.45px;word-spacing:0.9px">22 Jul 16:00</div><div class="t" style="left:451px;top:628px;letter-spacing:-0.45px;word-spacing:0.9px">23 Jul 08:00</div><div class="t" style="left:515px;top:628px;letter-spacing:-0.45px;word-spacing:0.9px">24 Jul 00:00</div><div class="t" style="left:579px;top:628px;letter-spacing:-0.45px;word-spacing:0.9px">24 Jul 16:00</div><div class="t" style="left:643px;top:628px;letter-spacing:-0.45px;word-spacing:0.9px">25 Jul 08:00</div><div class="t" style="left:707px;top:628px;letter-spacing:-0.45px;word-spacing:0.9px">26 Jul 00:00</div><div class="t" style="left:9px;top:39px;background:#000;height:9px;line-height:9px;width:89px;overflow:hidden;">#196487048 sell 2.00</div><div class="t" style="left:9px;top:58px;background:#000;height:9px;line-height:9px;width:89px;overflow:hidden;">#196483386 sell 2.00</div><div class="t" style="left:9px;top:62px;background:#000;height:9px;line-height:9px;width:89px;overflow:hidden;">#196483451 sell 2.00</div></div>
<div id="ctabs" class="a"><div class="a" style="left:-1px;top:0;width:1053px;height:2px;background:#fff"></div><div class="a" style="left:-1px;top:2px;width:1053px;height:1px;background:#000"></div><div class="a" style="left:0;top:3px;width:1px;height:18px;background:#696969"></div><div class="a" style="left:259px;top:2px;width:81px;height:20px;background:#808080"></div><div class="a" style="left:259px;top:2px;width:80px;height:19px;background:#fff;border:solid #000;border-width:0 1px 1px 1px;box-sizing:border-box"></div><div class="t" style="left:14px;">EURUSD,M15</div><div class="t" style="left:102px;">EURUSD,M15</div><div class="t" style="left:189px;">EURUSD,H4</div><div class="t" style="left:269px;color:#000">EURUSD,H1</div><div class="a" style="left:91px;top:5px;width:1px;height:13px;background:#666"></div><div class="a" style="left:179px;top:5px;width:1px;height:13px;background:#666"></div><svg style="left:1020px;top:7px" width="30" height="9"><path d="M6 0.500v7l-4-3.500z" fill="#8a8a8a"/><path d="M21 0.500v7l4-3.500z" fill="#8a8a8a"/></svg></div>
<div id="term" class="a">
<div class="a" style="left:0;top:-4px;width:227px;height:1px;background:#a0a0a0"></div><div class="a" style="left:0;top:-3px;width:1280px;height:2px;background:#fff"></div><svg style="left:3px;top:2px" width="9" height="9" viewBox="0 0 9 9"><path d="M1.500 2l5.500 5M7 2l-5.500 5" stroke="#000" stroke-width="1.700"/></svg><div class="a" style="left:1px;top:15px;width:13px;height:216px;background:linear-gradient(#d9e4f0,#b7c9dd)"></div><div class="t" style="left:-22px;top:193px;width:60px;transform:rotate(-90deg);color:#3c3c3c;text-align:left">Терминал</div><svg width="0" height="0" style="left:0;top:0"><defs><linearGradient id="pg" x1="0" y1="0" x2="1" y2="1"><stop offset="0.400" stop-color="#fff"/><stop offset="1" stop-color="#d8d8d8"/></linearGradient><radialGradient id="rb" cx="0.350" cy="0.300" r="0.800"><stop offset="0" stop-color="#ff9a70"/><stop offset="0.500" stop-color="#f04a1a"/><stop offset="1" stop-color="#c02a08"/></radialGradient></defs></svg><div class="grid"><div class="hdr" style="left:0;top:0;width:1260px;height:23px;border-right:none"><div class="hc" style="left:0;width:95px;border-right:1px solid #dedfe1;box-sizing:border-box"><div class="t" style="left:7px;right:auto;top:6px">Ордер</div><div class="t" style="left:52px;right:auto;top:5px;color:#8a8a8a;font-size:10px">/</div><svg style="left:56px;top:8px" width="8" height="7"><path d="M0.500 6.500l3.500-6 3.500 6z" fill="#fff" stroke="#dcdcdc"/></svg></div><div class="hc" style="left:95px;width:132px;border-right:1px solid #dedfe1;box-sizing:border-box;"><div class="t">Время</div></div><div class="hc" style="left:227px;width:66px;border-right:1px solid #dedfe1;box-sizing:border-box;"><div class="t">Тип</div></div><div class="hc" style="left:293px;width:51px;border-right:1px solid #dedfe1;box-sizing:border-box;"><div class="t">Объём</div></div><div class="hc" style="left:344px;width:66px;border-right:1px solid #dedfe1;box-sizing:border-box;"><div class="t">Символ</div></div><div class="hc" style="left:410px;width:73px;border-right:1px solid #dedfe1;box-sizing:border-box;"><div class="t">Цена</div></div><div class="hc" style="left:483px;width:73px;border-right:1px solid #dedfe1;box-sizing:border-box;"><div class="t">S / L</div></div><div class="hc" style="left:556px;width:73px;border-right:1px solid #dedfe1;box-sizing:border-box;"><div class="t">T / P</div></div><div class="hc" style="left:629px;width:73px;border-right:1px solid #dedfe1;box-sizing:border-box;"><div class="t">Цена</div></div><div class="hc" style="left:702px;width:73px;border-right:1px solid #dedfe1;box-sizing:border-box;"><div class="t">Комиссия</div></div><div class="hc" style="left:775px;width:73px;border-right:1px solid #dedfe1;box-sizing:border-box;"><div class="t">Налоги</div></div><div class="hc" style="left:848px;width:73px;border-right:1px solid #dedfe1;box-sizing:border-box;"><div class="t">Своп</div></div><div class="hc" style="left:921px;width:110px;border-right:1px solid #dedfe1;box-sizing:border-box;"><div class="t">Прибыль</div></div><div class="hc" style="left:1031px;width:229px;"><div class="t">Комментарий</div></div></div><div class="row" style="top:24px"><div class="c" style="left:0;width:95px"><svg style="left:3px;top:1px" width="14" height="16" viewBox="0 0 14 16"><path d="M1.500 1.500h6l3 3v9h-9z" fill="url(#pg)" stroke="#6a6a6a"/><path d="M7.500 1.500v3h3" fill="none" stroke="#6a6a6a"/><circle cx="9.800" cy="11.800" r="3" fill="url(#rb)" stroke="#a82a0c" stroke-width="0.700"/></svg><div class="t" style="left:25px;right:auto">196483364</div></div><div class="c" style="left:95px;width:132px"><div class="t">2013.07.26 09:52</div></div><div class="c" style="left:227px;width:66px"><div class="t">sell</div></div><div class="c" style="left:293px;width:51px"><div class="t">2.00</div></div><div class="c" style="left:344px;width:66px"><div class="t">eurusd</div></div><div class="c" style="left:410px;width:73px"><div class="t">1.32780</div></div><div class="c" style="left:483px;width:73px"><div class="t">0.00000</div></div><div class="c" style="left:556px;width:73px"><div class="t">0.00000</div></div><div class="c" style="left:629px;width:73px"><div class="t">1.32901</div></div><div class="c" style="left:702px;width:73px"><div class="t">0.00</div></div><div class="c" style="left:775px;width:73px"><div class="t">0.00</div></div><div class="c" style="left:848px;width:73px"><div class="t">0.00</div></div><div class="c" style="left:921px;width:110px"><div class="t" style="right:23px">-242.00</div></div><svg style="left:1016px;top:5px" width="9" height="9" viewBox="0 0 9 9"><path d="M1.500 1.500l6 6M7.500 1.500l-6 6" stroke="#7a7a7a" stroke-width="1.600"/></svg></div><div class="row odd" style="top:44px"><div class="c" style="left:0;width:95px"><svg style="left:3px;top:1px" width="14" height="16" viewBox="0 0 14 16"><path d="M1.500 1.500h6l3 3v9h-9z" fill="url(#pg)" stroke="#6a6a6a"/><path d="M7.500 1.500v3h3" fill="none" stroke="#6a6a6a"/><circle cx="9.800" cy="11.800" r="3" fill="url(#rb)" stroke="#a82a0c" stroke-width="0.700"/></svg><div class="t" style="left:25px;right:auto">196483386</div></div><div class="c" style="left:95px;width:132px"><div class="t">2013.07.26 09:52</div></div><div class="c" style="left:227px;width:66px"><div class="t">sell</div></div><div class="c" style="left:293px;width:51px"><div class="t">2.00</div></div><div class="c" style="left:344px;width:66px"><div class="t">eurusd</div></div><div class="c" style="left:410px;width:73px"><div class="t">1.32777</div></div><div class="c" style="left:483px;width:73px"><div class="t">0.00000</div></div><div class="c" style="left:556px;width:73px"><div class="t">0.00000</div></div><div class="c" style="left:629px;width:73px"><div class="t">1.32901</div></div><div class="c" style="left:702px;width:73px"><div class="t">0.00</div></div><div class="c" style="left:775px;width:73px"><div class="t">0.00</div></div><div class="c" style="left:848px;width:73px"><div class="t">0.00</div></div><div class="c" style="left:921px;width:110px"><div class="t" style="right:23px">-248.00</div></div><svg style="left:1016px;top:5px" width="9" height="9" viewBox="0 0 9 9"><path d="M1.500 1.500l6 6M7.500 1.500l-6 6" stroke="#7a7a7a" stroke-width="1.600"/></svg></div><div class="row" style="top:64px"><div class="c" style="left:0;width:95px"><svg style="left:3px;top:1px" width="14" height="16" viewBox="0 0 14 16"><path d="M1.500 1.500h6l3 3v9h-9z" fill="url(#pg)" stroke="#6a6a6a"/><path d="M7.500 1.500v3h3" fill="none" stroke="#6a6a6a"/><circle cx="9.800" cy="11.800" r="3" fill="url(#rb)" stroke="#a82a0c" stroke-width="0.700"/></svg><div class="t" style="left:25px;right:auto">196483428</div></div><div class="c" style="left:95px;width:132px"><div class="t">2013.07.26 09:52</div></div><div class="c" style="left:227px;width:66px"><div class="t">sell</div></div><div class="c" style="left:293px;width:51px"><div class="t">2.00</div></div><div class="c" style="left:344px;width:66px"><div class="t">eurusd</div></div><div class="c" style="left:410px;width:73px"><div class="t">1.32763</div></div><div class="c" style="left:483px;width:73px"><div class="t">0.00000</div></div><div class="c" style="left:556px;width:73px"><div class="t">0.00000</div></div><div class="c" style="left:629px;width:73px"><div class="t">1.32901</div></div><div class="c" style="left:702px;width:73px"><div class="t">0.00</div></div><div class="c" style="left:775px;width:73px"><div class="t">0.00</div></div><div class="c" style="left:848px;width:73px"><div class="t">0.00</div></div><div class="c" style="left:921px;width:110px"><div class="t" style="right:23px">-276.00</div></div><svg style="left:1016px;top:5px" width="9" height="9" viewBox="0 0 9 9"><path d="M1.500 1.500l6 6M7.500 1.500l-6 6" stroke="#7a7a7a" stroke-width="1.600"/></svg></div><div class="row odd" style="top:84px"><div class="c" style="left:0;width:95px"><svg style="left:3px;top:1px" width="14" height="16" viewBox="0 0 14 16"><path d="M1.500 1.500h6l3 3v9h-9z" fill="url(#pg)" stroke="#6a6a6a"/><path d="M7.500 1.500v3h3" fill="none" stroke="#6a6a6a"/><circle cx="9.800" cy="11.800" r="3" fill="url(#rb)" stroke="#a82a0c" stroke-width="0.700"/></svg><div class="t" style="left:25px;right:auto">196483451</div></div><div class="c" style="left:95px;width:132px"><div class="t">2013.07.26 09:53</div></div><div class="c" style="left:227px;width:66px"><div class="t">sell</div></div><div class="c" style="left:293px;width:51px"><div class="t">2.00</div></div><div class="c" style="left:344px;width:66px"><div class="t">eurusd</div></div><div class="c" style="left:410px;width:73px"><div class="t">1.32762</div></div><div class="c" style="left:483px;width:73px"><div class="t">0.00000</div></div><div class="c" style="left:556px;width:73px"><div class="t">0.00000</div></div><div class="c" style="left:629px;width:73px"><div class="t">1.32901</div></div><div class="c" style="left:702px;width:73px"><div class="t">0.00</div></div><div class="c" style="left:775px;width:73px"><div class="t">0.00</div></div><div class="c" style="left:848px;width:73px"><div class="t">0.00</div></div><div class="c" style="left:921px;width:110px"><div class="t" style="right:23px">-278.00</div></div><svg style="left:1016px;top:5px" width="9" height="9" viewBox="0 0 9 9"><path d="M1.500 1.500l6 6M7.500 1.500l-6 6" stroke="#7a7a7a" stroke-width="1.600"/></svg></div><div class="row" style="top:104px"><div class="c" style="left:0;width:95px"><svg style="left:3px;top:1px" width="14" height="16" viewBox="0 0 14 16"><path d="M1.500 1.500h6l3 3v9h-9z" fill="url(#pg)" stroke="#6a6a6a"/><path d="M7.500 1.500v3h3" fill="none" stroke="#6a6a6a"/><circle cx="9.800" cy="11.800" r="3" fill="url(#rb)" stroke="#a82a0c" stroke-width="0.700"/></svg><div class="t" style="left:25px;right:auto">196486882</div></div><div class="c" style="left:95px;width:132px"><div class="t">2013.07.26 10:09</div></div><div class="c" style="left:227px;width:66px"><div class="t">sell</div></div><div class="c" style="left:293px;width:51px"><div class="t">2.00</div></div><div class="c" style="left:344px;width:66px"><div class="t">eurusd</div></div><div class="c" style="left:410px;width:73px"><div class="t">1.32855</div></div><div class="c" style="left:483px;width:73px"><div class="t">0.00000</div></div><div class="c" style="left:556px;width:73px"><div class="t">0.00000</div></div><div class="c" style="left:629px;width:73px"><div class="t">1.32901</div></div><div class="c" style="left:702px;width:73px"><div class="t">0.00</div></div><div class="c" style="left:775px;width:73px"><div class="t">0.00</div></div><div class="c" style="left:848px;width:73px"><div class="t">0.00</div></div><div class="c" style="left:921px;width:110px"><div class="t" style="right:23px">-92.00</div></div><svg style="left:1016px;top:5px" width="9" height="9" viewBox="0 0 9 9"><path d="M1.500 1.500l6 6M7.500 1.500l-6 6" stroke="#7a7a7a" stroke-width="1.600"/></svg></div><div class="row odd" style="top:124px"><div class="c" style="left:0;width:95px"><svg style="left:3px;top:1px" width="14" height="16" viewBox="0 0 14 16"><path d="M1.500 1.500h6l3 3v9h-9z" fill="url(#pg)" stroke="#6a6a6a"/><path d="M7.500 1.500v3h3" fill="none" stroke="#6a6a6a"/><circle cx="9.800" cy="11.800" r="3" fill="url(#rb)" stroke="#a82a0c" stroke-width="0.700"/></svg><div class="t" style="left:25px;right:auto">196486989</div></div><div class="c" style="left:95px;width:132px"><div class="t">2013.07.26 10:10</div></div><div class="c" style="left:227px;width:66px"><div class="t">sell</div></div><div class="c" style="left:293px;width:51px"><div class="t">2.00</div></div><div class="c" style="left:344px;width:66px"><div class="t">eurusd</div></div><div class="c" style="left:410px;width:73px"><div class="t">1.32856</div></div><div class="c" style="left:483px;width:73px"><div class="t">0.00000</div></div><div class="c" style="left:556px;width:73px"><div class="t">0.00000</div></div><div class="c" style="left:629px;width:73px"><div class="t">1.32901</div></div><div class="c" style="left:702px;width:73px"><div class="t">0.00</div></div><div class="c" style="left:775px;width:73px"><div class="t">0.00</div></div><div class="c" style="left:848px;width:73px"><div class="t">0.00</div></div><div class="c" style="left:921px;width:110px"><div class="t" style="right:23px">-90.00</div></div><svg style="left:1016px;top:5px" width="9" height="9" viewBox="0 0 9 9"><path d="M1.500 1.500l6 6M7.500 1.500l-6 6" stroke="#7a7a7a" stroke-width="1.600"/></svg></div><div class="row" style="top:144px"><div class="c" style="left:0;width:95px"><svg style="left:3px;top:1px" width="14" height="16" viewBox="0 0 14 16"><path d="M1.500 1.500h6l3 3v9h-9z" fill="url(#pg)" stroke="#6a6a6a"/><path d="M7.500 1.500v3h3" fill="none" stroke="#6a6a6a"/><circle cx="9.800" cy="11.800" r="3" fill="url(#rb)" stroke="#a82a0c" stroke-width="0.700"/></svg><div class="t" style="left:25px;right:auto">196487028</div></div><div class="c" style="left:95px;width:132px"><div class="t">2013.07.26 10:10</div></div><div class="c" style="left:227px;width:66px"><div class="t">sell</div></div><div class="c" style="left:293px;width:51px"><div class="t">2.00</div></div><div class="c" style="left:344px;width:66px"><div class="t">eurusd</div></div><div class="c" style="left:410px;width:73px"><div class="t">1.32848</div></div><div class="c" style="left:483px;width:73px"><div class="t">0.00000</div></div><div class="c" style="left:556px;width:73px"><div class="t">0.00000</div></div><div class="c" style="left:629px;width:73px"><div class="t">1.32901</div></div><div class="c" style="left:702px;width:73px"><div class="t">0.00</div></div><div class="c" style="left:775px;width:73px"><div class="t">0.00</div></div><div class="c" style="left:848px;width:73px"><div class="t">0.00</div></div><div class="c" style="left:921px;width:110px"><div class="t" style="right:23px">-106.00</div></div><svg style="left:1016px;top:5px" width="9" height="9" viewBox="0 0 9 9"><path d="M1.500 1.500l6 6M7.500 1.500l-6 6" stroke="#7a7a7a" stroke-width="1.600"/></svg></div><div class="row odd" style="top:164px"><div class="c" style="left:0;width:95px"><svg style="left:3px;top:1px" width="14" height="16" viewBox="0 0 14 16"><path d="M1.500 1.500h6l3 3v9h-9z" fill="url(#pg)" stroke="#6a6a6a"/><path d="M7.500 1.500v3h3" fill="none" stroke="#6a6a6a"/><circle cx="9.800" cy="11.800" r="3" fill="url(#rb)" stroke="#a82a0c" stroke-width="0.700"/></svg><div class="t" style="left:25px;right:auto">196487048</div></div><div class="c" style="left:95px;width:132px"><div class="t">2013.07.26 10:10</div></div><div class="c" style="left:227px;width:66px"><div class="t">sell</div></div><div class="c" style="left:293px;width:51px"><div class="t">2.00</div></div><div class="c" style="left:344px;width:66px"><div class="t">eurusd</div></div><div class="c" style="left:410px;width:73px"><div class="t">1.32853</div></div><div class="c" style="left:483px;width:73px"><div class="t">0.00000</div></div><div class="c" style="left:556px;width:73px"><div class="t">0.00000</div></div><div class="c" style="left:629px;width:73px"><div class="t">1.32901</div></div><div class="c" style="left:702px;width:73px"><div class="t">0.00</div></div><div class="c" style="left:775px;width:73px"><div class="t">0.00</div></div><div class="c" style="left:848px;width:73px"><div class="t">0.00</div></div><div class="c" style="left:921px;width:110px"><div class="t" style="right:23px">-96.00</div></div><svg style="left:1016px;top:5px" width="9" height="9" viewBox="0 0 9 9"><path d="M1.500 1.500l6 6M7.500 1.500l-6 6" stroke="#7a7a7a" stroke-width="1.600"/></svg></div><div class="row" style="top:184px;height:20px;background:#c6c6c6;border-top:none;font-weight:bold"><svg style="left:3px;top:3px" width="13" height="14" viewBox="0 0 13 14"><rect x="0.500" y="0.500" width="11" height="13" rx="1.500" fill="#fff" stroke="#8a8a8a"/><path d="M6 11.500l-3.500-4h2v-3.500h3v3.500h2z" fill="#e8431f" stroke="#a82a0c" stroke-width="0.600"/></svg><div class="t" style="left:24px;top:3px;font-family:Liberation Sans,sans-serif;letter-spacing:-0.150px">Баланс: 8 606.84 USD&nbsp; Средства: 7 178.84&nbsp; Залог: 4 249.98&nbsp; Свободно: 2 928.86&nbsp; Уровень: 168.91%</div><div class="t" style="right:253px;top:3px;font-family:'Liberation Serif',serif;font-size:12px">-1 428.00</div></div></div><div class="a" style="left:84px;top:211px;width:1193px;height:1px;background:#000"></div><div class="a" style="left:1277px;top:1px;width:1px;height:231px;background:#fff"></div><div class="a" style="left:15px;top:231px;width:1263px;height:1px;background:#fff"></div><div class="a" style="left:17px;top:211px;width:68px;height:18px;background:#fff;border:solid #000;border-width:0 2px 2px 2px;box-sizing:border-box"></div><div class="btab" style="left:27px;color:#000;">Торговля</div><div class="btab" style="left:94px;">История Счета</div><div class="btab" style="left:190px;">Новости</div><div class="btab" style="left:252px;">Алерты</div><div class="btab" style="left:311px;">Почтовый ящик</div><div class="btab" style="left:412px;">Сигналы</div><div class="btab" style="left:476px;">Code Base</div><div class="btab" style="left:547px;">Эксперты</div><div class="btab" style="left:618px;">Журнал</div><div class="bsep" style="left:181px"></div><div class="bsep" style="left:242px"></div><div class="bsep" style="left:302px"></div><div class="bsep" style="left:402px"></div><div class="bsep" style="left:466px"></div><div class="bsep" style="left:537px"></div><div class="bsep" style="left:608px"></div><div class="bsep" style="left:668px"></div></div>
<div id="status" class="a"><div class="t" style="left:2px">Для справки, нажмите F1</div><div class="t" style="left:560px">Default</div><div class="s" style="left:554px"></div><div class="s" style="left:670px"></div><div class="s" style="left:772px"></div><div class="s" style="left:843px"></div><div class="s" style="left:914px"></div><div class="s" style="left:982px"></div><div class="s" style="left:1052px"></div><div class="s" style="left:1118px"></div><svg style="left:1123px;top:6px" width="26" height="14" viewBox="0 0 26 14"><rect x="0" y="0" width="2" height="8" fill="#5c7f10"/><rect x="0" y="9" width="2" height="3" fill="#0f3a6a"/><rect x="3" y="0" width="2" height="7" fill="#5c7f10"/><rect x="3" y="8" width="2" height="4" fill="#0f3a6a"/><rect x="6" y="0" width="2" height="6" fill="#5c7f10"/><rect x="6" y="7" width="2" height="5" fill="#0f3a6a"/><rect x="9" y="0" width="2" height="5" fill="#5c7f10"/><rect x="9" y="6" width="2" height="6" fill="#0f3a6a"/><rect x="12" y="0" width="2" height="4" fill="#5c7f10"/><rect x="12" y="5" width="2" height="7" fill="#0f3a6a"/><rect x="15" y="0" width="2" height="3" fill="#5c7f10"/><rect x="15" y="4" width="2" height="8" fill="#0f3a6a"/><rect x="18" y="0" width="2" height="2" fill="#5c7f10"/><rect x="18" y="3" width="2" height="9" fill="#0f3a6a"/><rect x="21" y="0" width="2" height="1" fill="#5c7f10"/><rect x="21" y="2" width="2" height="10" fill="#0f3a6a"/></svg><div class="t" style="left:1195px">39/0 kb</div></div>
<div class="a" style="left:1px;top:961px;width:39px;height:19px;background:linear-gradient(#fff,#e4e5f0);border:1px solid #767676;border-radius:3px;box-sizing:border-box;box-shadow:1px 1px 2px rgba(0,0,0,0.300)"><div class="t" style="left:5px;top:1px;color:#575757;font-family:Liberation Sans,sans-serif;font-size:12px;line-height:15px">Пуск</div></div>
<div id="task" class="a"><svg style="left:0;top:-9px" width="60" height="40" viewBox="0 0 60 40"><defs><radialGradient id="orb" cx="0.5" cy="0.350" r="0.700"><stop offset="0" stop-color="#cfe8fa"/><stop offset="0.500" stop-color="#5a98d4"/><stop offset="1" stop-color="#2a5a9a"/></radialGradient><radialGradient id="glow" cx="0.5" cy="0.5" r="0.5"><stop offset="0.700" stop-color="#e8f4ff" stop-opacity="0.900"/><stop offset="1" stop-color="#e8f4ff" stop-opacity="0"/></radialGradient></defs><circle cx="27" cy="23" r="24" fill="url(#glow)"/><circle cx="27" cy="23" r="18.500" fill="url(#orb)" stroke="#dcebf8" stroke-width="1.200"/><path d="M17.500 14.500c3-2 6.500-2 9 0l-2 7.500c-2.500-2-6-2-9 0z" fill="#f4622a"/><path d="M28.500 15c3 2 6.500 2 9.500 0l-2 7.500c-3 2-6.500 2-9.500 0z" fill="#8ad23a"/><path d="M15 23.500c3-2 6.500-2 9 0l-2 7.500c-2.500-2-6-2-9 0z" fill="#46a8f0"/><path d="M26 24c3 2 6.500 2 9.500 0l-2 7.500c-3 2-6.500 2-9.500 0z" fill="#fad22e"/></svg><div class="tbtn" style="left:59px"></div><div class="tbtn" style="left:151px"></div><div class="tbtn" style="left:197px"></div><div class="tbtn" style="left:243px"></div><svg style="left:71px;top:5px" width="22" height="20" viewBox="0 0 22 20"><path d="M2.500 4.500h6l2 2h9v11h-17z" fill="#f4d77a" stroke="#c9a03a"/><rect x="2.500" y="8.500" width="17" height="9" fill="#fae9a8" stroke="#c9a03a"/><rect x="6.500" y="11.500" width="9" height="6" fill="#5aa6e6" stroke="#2f78c0"/></svg><svg style="left:117px;top:5px" width="20" height="20" viewBox="0 0 20 20"><circle cx="10" cy="10" r="8.500" fill="#f6f6f6" stroke="#d0d0d0"/><path d="M4 3.500l6 7v7M16 3.500l-6 7" stroke="#e61400" stroke-width="2.800" fill="none"/></svg><svg style="left:164px;top:5px" width="20" height="20" viewBox="0 0 20 20"><ellipse cx="10" cy="10" rx="7" ry="8.500" fill="#d41a1a" stroke="#8a0a0a"/><ellipse cx="10" cy="10" rx="2.500" ry="6" fill="#f4e8e8"/></svg><svg style="left:211px;top:7px" width="16" height="16" viewBox="0 0 16 16"><rect x="0.500" y="0.500" width="15" height="15" rx="2" fill="#fdfaf4" stroke="#e0d8c8"/><path d="M2 7l2-3 2 3 2-3 2 3 2-3 2 3" stroke="#e86a58" stroke-width="0.800" fill="none"/><path d="M2 9.500l2-3 2 3 2-3 2 3 2-3 2 3" stroke="#eea060" stroke-width="0.800" fill="none"/><path d="M2 12l2-3 2 3 2-3 2 3 2-3 2 3" stroke="#8aca70" stroke-width="0.800" fill="none"/><path d="M2 14l2-2 2 2 2-2 2 2 2-2 2 2" stroke="#8aca70" stroke-width="0.800" fill="none"/></svg><svg style="left:257px;top:7px" width="16" height="16" viewBox="0 0 16 16"><rect x="0.500" y="0.500" width="15" height="15" rx="2" fill="#fdfaf4" stroke="#e0d8c8"/><path d="M2 7l2-3 2 3 2-3 2 3 2-3 2 3" stroke="#e86a58" stroke-width="0.800" fill="none"/><path d="M2 9.500l2-3 2 3 2-3 2 3 2-3 2 3" stroke="#eea060" stroke-width="0.800" fill="none"/><path d="M2 12l2-3 2 3 2-3 2 3 2-3 2 3" stroke="#8aca70" stroke-width="0.800" fill="none"/><path d="M2 14l2-2 2 2 2-2 2 2 2-2 2 2" stroke="#8aca70" stroke-width="0.800" fill="none"/></svg><svg style="left:1070px;top:1px" width="210" height="29" viewBox="1070 995 210 29"><path d="M1074 1012l4-4.500 4 4.500z" fill="#fff"/><rect x="1094" y="1002" width="16" height="16" fill="#7f0a0a"/><text x="1102" y="1014" font-size="11" fill="#fff" text-anchor="middle" font-family="Liberation Sans, sans-serif">En</text><path d="M1120 1007h3l4-4v14l-4-4h-3z" fill="#fff" stroke="#555" stroke-width="0.700"/><path d="M1129.500 1006c2 2.500 2 5.500 0 8" fill="none" stroke="#e8e8e8" stroke-width="1.200"/><g fill="#fff" stroke="#5a6678" stroke-width="0.500"><rect x="1142.500" y="1013.500" width="2.500" height="3"/><rect x="1145.800" y="1011.500" width="2.500" height="5"/><rect x="1149.100" y="1009" width="2.500" height="7.500"/><rect x="1152.400" y="1006.500" width="2.500" height="10"/><rect x="1155.700" y="1003.500" width="2.500" height="13"/></g><path d="M1167.500 1002v16" stroke="#fff" stroke-width="1.600"/><path d="M1169 1003.500c4-2 7 2 12 0v7c-5 2-8-2-12 0z" fill="#fff" stroke="#666" stroke-width="0.600"/><text x="1227" y="1014" font-size="12" fill="#fff" text-anchor="middle" font-family="Liberation Sans, sans-serif">15:12</text><rect x="1265.500" y="996.500" width="15" height="28" fill="#8a9cb6" stroke="#5a6a80"/><rect x="1266.500" y="997.500" width="13" height="26" fill="none" stroke="#b4c2d6"/></svg></div>
</body></html>
